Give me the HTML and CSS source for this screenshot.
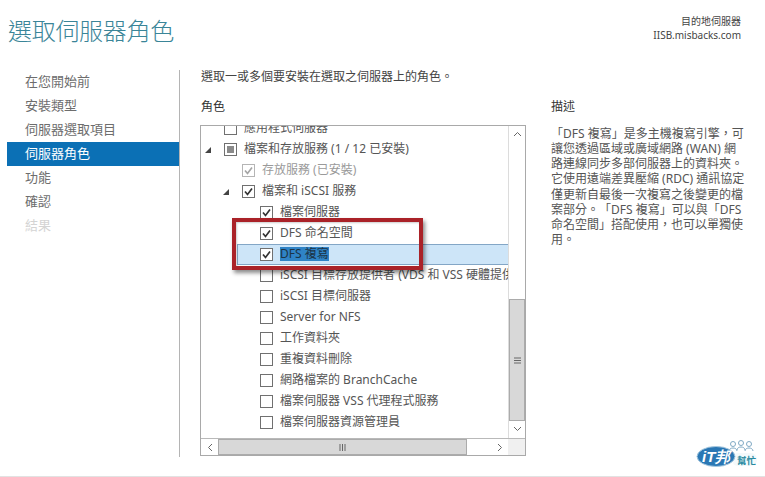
FILE: index.html
```html
<!DOCTYPE html>
<html lang="zh-Hant">
<head>
<meta charset="utf-8">
<title>選取伺服器角色</title>
<link rel="stylesheet" href="styles.css">
</head>
<body>
<div class="app">
  <header class="top">
    <h1 class="title">選取伺服器角色</h1>
    <div class="dest">
      <div class="dest-label">目的地伺服器</div>
      <div class="dest-name">IISB.misbacks.com</div>
    </div>
  </header>
  <div class="main">
    <nav class="nav">
      <div class="nav-item">在您開始前</div>
      <div class="nav-item">安裝類型</div>
      <div class="nav-item">伺服器選取項目</div>
      <div class="nav-item active">伺服器角色</div>
      <div class="nav-item">功能</div>
      <div class="nav-item">確認</div>
      <div class="nav-item disabled">結果</div>
    </nav>
    <section class="content">
      <div class="roles">
        <p class="intro">選取一或多個要安裝在選取之伺服器上的角色。</p>
        <h2 class="heading">角色</h2>
        <div class="listbox">
          <div class="viewport">
            <div class="rows">
              <div class="row lv0 dim"><span class="exp"></span><span class="box"></span><span class="label">應用程式伺服器</span></div>
              <div class="row lv0"><span class="exp"><svg class="tri" width="6" height="6" viewBox="0 0 6 6"><path d="M6 0V6H0Z"/></svg></span><span class="box"><span class="fill"></span></span><span class="label">檔案和存放服務 (1 / 12 已安裝)</span></div>
              <div class="row lv1 gray"><span class="exp"></span><span class="box"><svg class="chk" width="11" height="11" viewBox="0 0 11 11"><path d="M2 5.5L4.5 8.5L9 2.5"/></svg></span><span class="label">存放服務 (已安裝)</span></div>
              <div class="row lv1 tri-row"><span class="exp"><svg class="tri" width="6" height="6" viewBox="0 0 6 6"><path d="M6 0V6H0Z"/></svg></span><span class="box"><svg class="chk" width="11" height="11" viewBox="0 0 11 11"><path d="M2 5.5L4.5 8.5L9 2.5"/></svg></span><span class="label">檔案和 iSCSI 服務</span></div>
              <div class="row lv2"><span class="exp"></span><span class="box"><svg class="chk" width="11" height="11" viewBox="0 0 11 11"><path d="M2 5.5L4.5 8.5L9 2.5"/></svg></span><span class="label">檔案伺服器</span></div>
              <div class="row lv2"><span class="exp"></span><span class="box"><svg class="chk" width="11" height="11" viewBox="0 0 11 11"><path d="M2 5.5L4.5 8.5L9 2.5"/></svg></span><span class="label">DFS 命名空間</span></div>
              <div class="row lv2 selected"><span class="exp"></span><span class="box"><svg class="chk" width="11" height="11" viewBox="0 0 11 11"><path d="M2 5.5L4.5 8.5L9 2.5"/></svg></span><span class="label hl">DFS 複寫</span></div>
              <div class="row lv2"><span class="exp"></span><span class="box"></span><span class="label">iSCSI 目標存放提供者 (VDS 和 VSS 硬體提供者)</span></div>
              <div class="row lv2"><span class="exp"></span><span class="box"></span><span class="label">iSCSI 目標伺服器</span></div>
              <div class="row lv2"><span class="exp"></span><span class="box"></span><span class="label">Server for NFS</span></div>
              <div class="row lv2"><span class="exp"></span><span class="box"></span><span class="label">工作資料夾</span></div>
              <div class="row lv2"><span class="exp"></span><span class="box"></span><span class="label">重複資料刪除</span></div>
              <div class="row lv2"><span class="exp"></span><span class="box"></span><span class="label">網路檔案的 BranchCache</span></div>
              <div class="row lv2"><span class="exp"></span><span class="box"></span><span class="label">檔案伺服器 VSS 代理程式服務</span></div>
              <div class="row lv2"><span class="exp"></span><span class="box"></span><span class="label">檔案伺服器資源管理員</span></div>
            </div>
            <div class="vbar">
              <div class="sb-btn"><svg width="9" height="6" viewBox="0 0 9 6"><path d="M1 5L4.5 1.5L8 5"/></svg></div>
              <div class="v-track"></div>
              <div class="v-thumb"><svg width="7" height="7" viewBox="0 0 7 7"><path d="M0 1H7M0 3.5H7M0 6H7"/></svg></div>
              <div class="sb-btn"><svg width="9" height="6" viewBox="0 0 9 6"><path d="M1 1L4.5 4.5L8 1"/></svg></div>
            </div>
          </div>
          <div class="hbar">
            <div class="sb-btn h"><svg width="6" height="9" viewBox="0 0 6 9"><path d="M5 1L1.5 4.5L5 8"/></svg></div>
            <div class="h-thumb"><svg width="7" height="7" viewBox="0 0 7 7"><path d="M1 0V7M3.5 0V7M6 0V7"/></svg></div>
            <div class="h-track"></div>
            <div class="sb-btn h"><svg width="6" height="9" viewBox="0 0 6 9"><path d="M1 1L4.5 4.5L1 8"/></svg></div>
            <div class="corner"></div>
          </div>
        </div>
      </div>
      <aside class="desc">
        <h2 class="heading">描述</h2>
        <p class="desc-text">「DFS 複寫」是多主機複寫引擎，可<br>讓您透過區域或廣域網路 (WAN) 網<br>路連線同步多部伺服器上的資料夾。<br>它使用遠端差異壓縮 (RDC) 通訊協定<br>僅更新自最後一次複寫之後變更的檔<br>案部分。「DFS 複寫」可以與「DFS<br>命名空間」搭配使用，也可以單獨使<br>用。</p>
      </aside>
    </section>
  </div>
  <div class="callout"></div>
  <svg class="logo" width="62" height="32" viewBox="0 0 62 32">
    <g fill="none" stroke="#7fa9c4" stroke-width="1">
      <circle cx="37" cy="5" r="2.5"/><path d="M33 12c0-4 8-4 8 0"/>
      <circle cx="45" cy="4" r="2.5"/><path d="M41 11c0-4 8-4 8 0"/>
      <circle cx="53" cy="5" r="2.5"/><path d="M49 12c0-4 8-4 8 0"/>
    </g>
    <rect x="36" y="14" width="25" height="13" rx="6" fill="#f4f9fb"/>
    <text class="logo-help" x="41" y="25">幫忙</text>
    <ellipse cx="20" cy="17.5" rx="19" ry="10" fill="#2a77b4" stroke="#a6c8df"/>
    <text class="logo-it" x="6" y="22.5">iT邦</text>
  </svg>
</div>
</body>
</html>
```
FILE: styles.css
```css
* { box-sizing: border-box; }
html, body { margin: 0; padding: 0; background: #fff; }
body { font-family: "Noto Sans", "Noto Sans CJK TC", sans-serif; color: #555; text-spacing-trim: space-all; }
.app { position: relative; width: 765px; height: 477px; overflow: hidden; border-bottom: 1px solid #e2e2e2; }

.top { display: flex; justify-content: space-between; height: 70px; padding-left: 8px; padding-right: 24px; }
.title { margin: 13px 0 0; font-size: 24px; line-height: 33px; letter-spacing: -0.3px; font-weight: 300; color: #3a8598; font-family: "Noto Sans CJK TC", sans-serif; }
.dest { margin-top: 14px; text-align: right; color: #444; }
.dest-label { font-size: 10px; line-height: 14px; }
.dest-name { font-size: 10px; line-height: 14px; }

.main { display: flex; height: 387px; }
.nav { width: 179px; padding-left: 7px; }
.nav-item { height: 24px; line-height: 22px; padding-left: 18px; font-size: 13px; color: #6d6d6d; }
.nav-item.active { background: #0b70b5; color: #fff; }
.nav-item.disabled { color: #d4d4d4; }

.content { display: flex; flex: 1; border-left: 1px solid #b4b4b4; padding-left: 21px; }
.roles { width: 325px; }
.intro { margin: 0; height: 27px; font-size: 12px; line-height: 14px; color: #444; white-space: nowrap; }
.heading { margin: 0; font-size: 12px; line-height: 20px; font-weight: 400; color: #333; height: 28px; }
.listbox { width: 326px; height: 331px; margin-left: -1px; border: 1px solid #a9a9a9; display: flex; flex-direction: column; }
.viewport { position: relative; display: flex; height: 312px; overflow: hidden; }
.rows { flex: none; width: 307px; overflow: hidden; }
.row { display: flex; align-items: center; height: 21px; font-size: 12px; color: #555; white-space: nowrap; }
.row:first-child { margin-top: -8px; }
.lv0 { padding-left: 4px; }
.lv1 { padding-left: 22px; }
.lv2 { padding-left: 40px; }
.exp { flex: none; width: 19px; display: flex; align-items: center; }
.tri { fill: #444; }
.box { flex: none; display: flex; align-items: center; justify-content: center; width: 13px; height: 13px; margin-right: 7px; border: 1px solid #707070; background: #fff; }
.fill { width: 7px; height: 7px; background: #8a8a8a; }
.chk { fill: none; stroke: #333; stroke-width: 1.7; }
.label { line-height: 14px; margin-bottom: 2px; }
.gray { color: #9a9a9a; }
.gray .box { border-color: #b5b5b5; }
.gray .chk { stroke: #a5a5a5; }
.selected { margin-left: 36px; padding-left: 3px; background: #cde5f8; border: 1px solid #83a6c6; border-right: 0; }
.hl { background: #2f83c6; color: #1c3447; }

.vbar { flex: none; width: 17px; display: flex; flex-direction: column; border-left: 1px solid #dcdcdc; }
.sb-btn { flex: none; display: flex; align-items: center; justify-content: center; width: 17px; height: 16px; background: #fff; }
.sb-btn svg, .v-thumb svg, .h-thumb svg { fill: none; stroke: #666; stroke-width: 1; }
.v-track { height: 157px; }
.v-thumb { flex: none; height: 122px; display: flex; align-items: center; justify-content: center; background: #d8d8d8; border: 1px solid #ababab; }
.hbar { flex: none; display: flex; height: 17px; border-top: 1px solid #b9b9b9; }
.sb-btn.h { height: 16px; }
.h-thumb { flex: none; width: 249px; display: flex; align-items: center; justify-content: center; background: #d8d8d8; border: 1px solid #ababab; }
.h-track { flex: none; width: 24px; }
.corner { flex: 1; background: #f0f0f0; }

.desc { margin-left: 25px; width: 200px; }
.desc .heading { padding-top: 27px; height: 56px; }
.desc-text { margin: 0; font-size: 12px; line-height: 15.15px; color: #555; white-space: nowrap; }

.callout { position: absolute; left: 232px; top: 218px; width: 191px; height: 52px; border: 4px solid #aa2228; box-shadow: 2px 3px 4px rgba(0,0,0,.45), inset 1px 1px 2px rgba(0,0,0,.2); }
.logo { position: absolute; left: 696px; top: 439px; }
.logo-it { font-family: "Liberation Sans", sans-serif; font-size: 15px; font-weight: 700; font-style: italic; fill: #fff; }
.logo-help { font-family: "Noto Sans CJK TC", sans-serif; font-size: 9.5px; font-weight: 700; fill: #2a8aa0; }
```
